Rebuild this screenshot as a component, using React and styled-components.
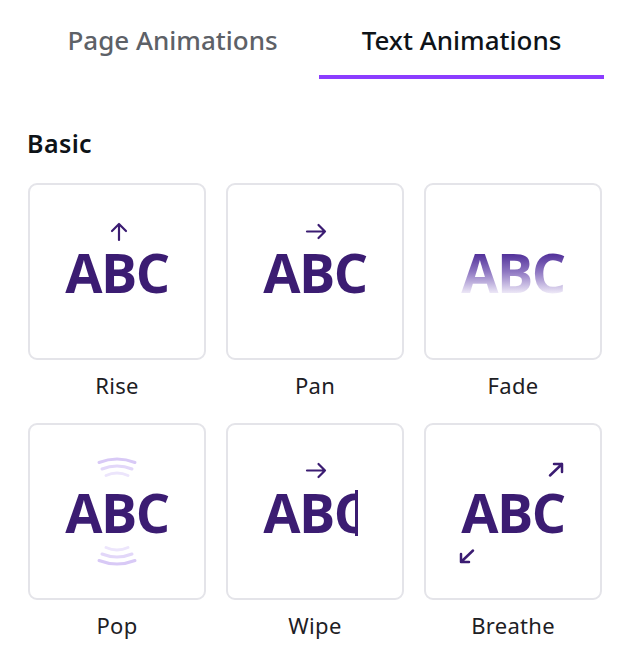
import React from 'react'
import styled, { createGlobalStyle, css } from 'styled-components'

const GlobalStyle = createGlobalStyle`
  html, body {
    margin: 0;
    padding: 0;
    background: #ffffff;
  }
  body {
    font-family: "Noto Sans", "Liberation Sans", sans-serif;
    color: #0e1318;
  }
`

const PURPLE = '#3b1c72'

const Panel = styled.div`
  width: 643px;
  height: 662px;
  overflow: hidden;
  background: #ffffff;
`

const Tabs = styled.div`
  display: flex;
  gap: 4px;
  padding-left: 30px;
`

const Tab = styled.div`
  width: 285px;
  padding-top: 22px;
  padding-bottom: 17px;
  border-bottom: 4px solid ${p => (p.$active ? '#8b3dff' : 'transparent')};
  text-align: center;
  font-size: 26px;
  line-height: 36px;
  font-weight: 500;
  color: ${p => (p.$active ? '#0e1318' : '#5d6167')};
`

const Section = styled.section`
  padding: 48px 0 0 28px;
`

const Heading = styled.h2`
  margin: 0 0 23px -1px;
  font-size: 25px;
  line-height: 33px;
  font-weight: 600;
  letter-spacing: 0.4px;
  color: #0e1318;
`

const Grid = styled.div`
  display: grid;
  grid-template-columns: repeat(3, 178px);
  column-gap: 20px;
  row-gap: 24px;
`

const Item = styled.div`
  display: flex;
  flex-direction: column;
  align-items: center;
`

/* preview tile: decoration row / word / decoration row, word stays centred */
const Card = styled.div`
  box-sizing: border-box;
  width: 178px;
  height: 177px;
  border: 2px solid #e4e4e9;
  border-radius: 9px;
  display: grid;
  grid-template-rows: 1fr auto 1fr;
  grid-template-columns: auto;
  justify-content: center;
`

const Top = styled.div`
  align-self: end;
  display: flex;
  justify-content: ${p => p.$justify || 'center'};
  margin: 0 ${p => p.$mr || 0}px ${p => p.$gap || 0}px ${p => p.$ml || 0}px;
`

const Bottom = styled.div`
  align-self: start;
  display: flex;
  justify-content: ${p => p.$justify || 'center'};
  margin: ${p => p.$gap || 0}px ${p => p.$mr || 0}px 0 ${p => p.$ml || 0}px;
`

const Label = styled.div`
  margin-top: 11px;
  font-size: 22px;
  line-height: 28px;
  letter-spacing: 0.3px;
  color: #1d2024;
`

const Word = styled.div`
  position: relative;
  font-family: "Open Sans", "Noto Sans", sans-serif;
  font-weight: 700;
  font-size: 54px;
  line-height: 56px;
  height: 56px;
  letter-spacing: -1.5px;
  color: ${PURPLE};
`

const Letters = styled.span`
  display: block;
  ${p => p.$fade && css`
    background: linear-gradient(180deg, #52319a 18%, #8f78c2 50%, #f3effa 90%);
    -webkit-background-clip: text;
    background-clip: text;
    color: transparent;
  `}
  ${p => p.$wipe && css`
    clip-path: inset(0 11px 0 0);
  `}
`

const Icon = styled.svg`
  display: block;
  overflow: visible;
  fill: none;
  stroke-linecap: round;
  stroke-linejoin: round;
`

const WipeBar = styled.span`
  position: absolute;
  top: 6px;
  bottom: 4px;
  right: 9px;
  width: 2.5px;
  background: ${PURPLE};
`

const UpArrow = () => (
  <Icon width="18" height="19" viewBox="0 0 18 19">
    <path d="M9 18V2M2 9l7-7 7 7" stroke={PURPLE} strokeWidth="2.2" />
  </Icon>
)

const RightArrow = () => (
  <Icon width="21" height="15" viewBox="0 0 21 15">
    <path d="M1 7.5h18M12.5 1l6.5 6.5-6.5 6.5" stroke={PURPLE} strokeWidth="2.2" />
  </Icon>
)

const Arcs = ({ flip }) => (
  <Icon width="40" height="21" viewBox="0 0 40 21" style={flip ? { transform: 'scaleY(-1)' } : undefined}>
    <path d="M2 6.5Q20 -0.5 38 6.5" stroke="#d8c9f6" strokeWidth="3" />
    <path d="M5 13Q20 7 35 13" stroke="#e2d7f9" strokeWidth="3" />
    <path d="M9 19.5Q20 14.5 31 19.5" stroke="#ece5fc" strokeWidth="3" />
  </Icon>
)

const UpRight = () => (
  <Icon width="16" height="15" viewBox="0 0 16 15">
    <path d="M2 13.5L14 2M6 2h8v8" stroke={PURPLE} strokeWidth="2.5" />
  </Icon>
)

const DownLeft = () => (
  <Icon width="16" height="15" viewBox="0 0 16 15">
    <path d="M14 1.5L2 13M10 13H2V5" stroke={PURPLE} strokeWidth="2.5" />
  </Icon>
)

const animations = [
  { name: 'Rise', top: <Top $gap={3} $ml={4}><UpArrow /></Top> },
  { name: 'Pan', top: <Top $gap={5} $ml={3}><RightArrow /></Top> },
  { name: 'Fade' },
  {
    name: 'Pop',
    top: <Top $gap={7}><Arcs /></Top>,
    bottom: <Bottom $gap={6}><Arcs flip /></Bottom>,
  },
  { name: 'Wipe', wipe: true, top: <Top $gap={6} $ml={3}><RightArrow /></Top> },
  {
    name: 'Breathe',
    top: <Top $gap={7} $justify="flex-end" $mr={1}><UpRight /></Top>,
    bottom: <Bottom $gap={9} $justify="flex-start" $ml={-2}><DownLeft /></Bottom>,
  },
]

export default function App() {
  return (
    <Panel>
      <GlobalStyle />
      <Tabs>
        <Tab>Page Animations</Tab>
        <Tab $active>Text Animations</Tab>
      </Tabs>
      <Section>
        <Heading>Basic</Heading>
        <Grid>
          {animations.map(a => (
            <Item key={a.name}>
              <Card>
                {a.top || <Top />}
                <Word>
                  <Letters $fade={a.name === 'Fade'} $wipe={a.wipe}>ABC</Letters>
                  {a.wipe && <WipeBar />}
                </Word>
                {a.bottom || <Bottom />}
              </Card>
              <Label>{a.name}</Label>
            </Item>
          ))}
        </Grid>
      </Section>
    </Panel>
  )
}
